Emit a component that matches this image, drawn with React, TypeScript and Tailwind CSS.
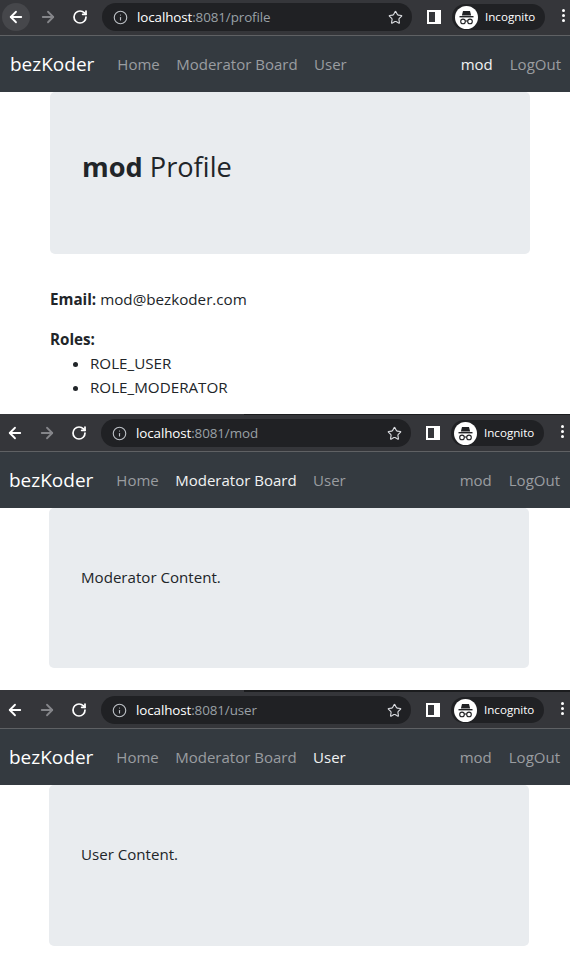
import type { ReactNode } from "react";
import { ArrowLeft, ArrowRight, Info, RotateCw, Star } from "lucide-react";

function IncognitoIcon() {
  return (
    <svg width="23" height="23" viewBox="0 0 23 23">
      <circle cx="11.5" cy="11.5" r="11.5" fill="#fff" />
      <path d="M8 5h7l1.1 4.4H6.9z" fill="#202124" />
      <rect x="4.5" y="10" width="14" height="1.4" fill="#202124" />
      <circle cx="8" cy="15.4" r="2.3" fill="none" stroke="#202124" strokeWidth="1.1" />
      <circle cx="15" cy="15.4" r="2.3" fill="none" stroke="#202124" strokeWidth="1.1" />
      <path d="M10.3 15h2.4" stroke="#202124" strokeWidth="1.1" />
    </svg>
  );
}

function BrowserBar({ path, backHover, size, edge }: { path: string; backHover?: boolean; size: string; edge?: string }) {
  return (
    <div className={`relative flex items-start border-b border-[#5f6164] bg-[#35363a] ${size}`}>
      {/* dark edge left over from the stitched screenshots */}
      {edge && <div className={`absolute left-[245px] right-0 top-0 bg-[#1b1c1e] ${edge}`} />}
      <div className="ml-[2px] flex h-[28px] w-[28px] items-center justify-center">
        <div className={backHover ? "flex h-[28px] w-[28px] items-center justify-center rounded-full bg-[#46474b]" : "flex h-[28px] w-[28px] items-center justify-center"}>
          <ArrowLeft size={18} strokeWidth={2.4} className="text-white" />
        </div>
      </div>
      <div className="ml-[4px] flex h-[28px] w-[28px] items-center justify-center">
        <ArrowRight size={18} strokeWidth={2.4} className="text-[#85868a]" />
      </div>
      <div className="ml-[4px] flex h-[28px] w-[28px] items-center justify-center">
        <RotateCw size={16} strokeWidth={2.6} className="text-white" />
      </div>
      <div className="ml-[8px] flex h-[28px] w-[310px] items-center rounded-full bg-[#202124] pl-[11px] pr-[9px]">
        <Info size={15} strokeWidth={1.8} className="text-[#bdc1c6]" />
        <span className="ml-[9px] flex-1 text-[13.4px] tracking-[-0.1px] text-[#9aa0a6]">
          <span className="text-white">localhost</span>:8081/{path}
        </span>
        <Star size={15} strokeWidth={1.8} className="text-[#dadce0]" />
      </div>
      <div className="ml-[15px] mt-[7px] flex h-[14px] w-[14px] justify-end border-[2px] border-white">
        <div className="h-full w-[4px] bg-white" />
      </div>
      <div className="ml-[11px] mt-[1px] flex h-[26px] w-[93px] items-center rounded-full bg-[#202124] pl-[3px]">
        <IncognitoIcon />
        <span className="ml-[7px] text-[11.6px] text-white">Incognito</span>
      </div>
      <div className="ml-[17px] mt-[6px] flex flex-col gap-[2px]">
        <div className="h-[3px] w-[3px] rounded-full bg-white" />
        <div className="h-[3px] w-[3px] rounded-full bg-white" />
        <div className="h-[3px] w-[3px] rounded-full bg-white" />
      </div>
    </div>
  );
}

function NavBar({ active }: { active: string }) {
  const link = (name: string) => (
    <span className={active === name ? "text-[#f1f2f3]" : "text-[#9a9da0]"}>{name}</span>
  );
  return (
    <nav className="flex h-[56px] items-center bg-[#343a40] pl-[10px] pr-[10px] text-[15px]">
      <span className="mr-[23px] text-[19px] text-white">bezKoder</span>
      <div className="flex flex-1 gap-[16.5px]">
        {link("Home")}
        {link("Moderator Board")}
        {link("User")}
      </div>
      <div className="flex gap-[17px]">
        {link("mod")}
        {link("LogOut")}
      </div>
    </nav>
  );
}

function Screen({ path, active, backHover, height, bar, edge, shift, children }: {
  path: string;
  active: string;
  backHover?: boolean;
  height: string;
  bar: string;
  edge?: string;
  shift?: boolean;
  children: ReactNode;
}) {
  return (
    <section className={`w-[571px] ${height} ${shift ? "-ml-px" : ""}`}>
      <BrowserBar path={path} backHover={backHover} size={bar} edge={edge} />
      <NavBar active={active} />
      <div className="ml-[50px] w-[480px]">{children}</div>
    </section>
  );
}

export default function App() {
  return (
    <div className="h-[960px] w-[570px] overflow-hidden bg-white text-[#212529] font-['Open_Sans',sans-serif]">
      <Screen path="profile" active="mod" backHover height="h-[414px]" bar="h-[36px] pt-[3px]">
        <div className="h-[162px] rounded-[5px] bg-[#e9ecef] px-[32px] pt-[55px]">
          <h3 className="text-[27.2px] leading-[40px]"><strong>mod</strong> Profile</h3>
        </div>
        <p className="mt-[33px] text-[15.2px] leading-[24px]"><strong>Email:</strong> mod@bezkoder.com</p>
        <p className="mt-[16px] text-[15.2px] font-bold leading-[24px]">Roles:</p>
        <ul className="list-disc pl-[40px] text-[15.2px] leading-[24px]">
          <li>ROLE_USER</li>
          <li>ROLE_MODERATOR</li>
        </ul>
      </Screen>
      <Screen path="mod" active="Moderator Board" height="h-[276px]" bar="h-[38px] pt-[5px]" edge="h-px" shift>
        <div className="h-[160px] rounded-[5px] bg-[#e9ecef] px-[32px] pt-[57px] text-[15.1px] leading-[24px]">
          Moderator Content.
        </div>
      </Screen>
      <Screen path="user" active="User" height="h-[270px]" bar="h-[39px] pt-[6px]" edge="h-[2px]" shift>
        <div className="h-[161px] rounded-[5px] bg-[#e9ecef] px-[32px] pt-[57px] text-[15.1px] leading-[24px]">
          User Content.
        </div>
      </Screen>
    </div>
  );
}
